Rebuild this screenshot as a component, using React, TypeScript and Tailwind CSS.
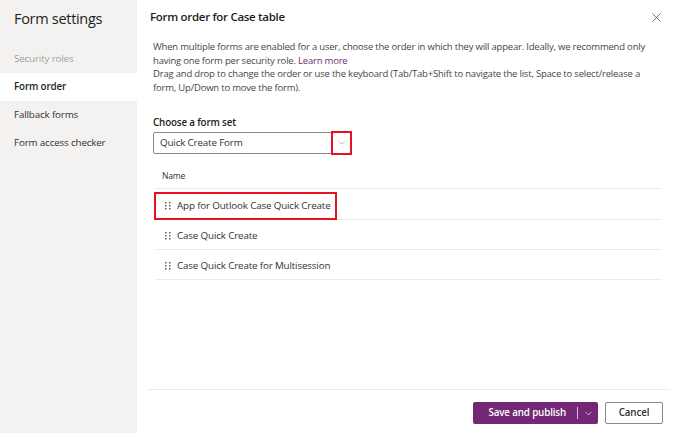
import { ChevronDown, X } from "lucide-react";

const navItems = [
  { label: "Security roles", muted: true },
  { label: "Form order", active: true },
  { label: "Fallback forms" },
  { label: "Form access checker" },
];

const forms = [
  "App for Outlook Case Quick Create",
  "Case Quick Create",
  "Case Quick Create for Multisession",
];

function Grip() {
  return (
    <svg width="6" height="8" viewBox="0 0 6 8" className="shrink-0">
      {[0, 3, 6].map((y) =>
        [0, 4].map((x) => <rect key={`${x}-${y}`} x={x} y={y} width="1.5" height="1.5" fill="#605e5c" />)
      )}
    </svg>
  );
}

export default function App() {
  return (
    <div
      className="flex h-[433px] w-[674px] bg-white text-[#323130] tracking-[-0.15px]"
      style={{ fontFamily: '"Open Sans", "Noto Sans", sans-serif' }}
    >
      {/* sidebar */}
      <aside className="w-[137px] shrink-0 bg-[#f3f2f1] pt-[8px]">
        <h1 className="pl-[14px] text-[14.5px] leading-[22px] tracking-[-0.3px] text-[#201f1e]">Form settings</h1>
        <nav className="mt-[15px] flex flex-col">
          {navItems.map((n) => (
            <div
              key={n.label}
              className={`h-[28px] flex items-center pl-[14px] text-[9.8px] ${
                n.active ? "bg-white font-semibold text-[#201f1e]" : n.muted ? "text-[#a19f9d]" : "text-[#323130]"
              }`}
            >
              {n.label}
            </div>
          ))}
        </nav>
      </aside>

      {/* main */}
      <main className="flex-1 flex flex-col">
        <div className="flex items-center justify-between pl-[13px] pr-[10px] pt-[8px]">
          <h2 className="text-[11.5px] leading-[18px] font-semibold tracking-[-0.3px] text-[#201f1e]">Form order for Case table</h2>
          <X size={15} strokeWidth={1.2} className="text-[#742774]" />
        </div>

        <div className="pl-[16px] pr-[6px] mt-[14px] text-[9.5px] leading-[13.5px] tracking-[-0.2px] text-[#484644] whitespace-nowrap">
          <p>
            When multiple forms are enabled for a user, choose the order in which they will appear. Ideally, we recommend only
            <br />
            having one form per security role. <span className="text-[#742774]">Learn more</span>
          </p>
          <p>
            Drag and drop to change the order or use the keyboard (Tab/Tab+Shift to navigate the list, Space to select/release a
            <br />
            form, Up/Down to move the form).
          </p>
        </div>

        <div className="pl-[16px] mt-[22px]">
          <label className="block text-[9.8px] leading-[14px] font-semibold text-[#201f1e]">Choose a form set</label>
          <div className="mt-[2px] flex h-[22px] w-[198px] items-center border border-[#8a8886] rounded-[2px]">
            <span className="flex-1 pl-[6px] text-[9.8px] text-[#323130]">Quick Create Form</span>
            <div className="flex h-[24px] w-[21px] items-center justify-center border-2 border-[#e81123] -mr-[2px]">
              <ChevronDown size={10} strokeWidth={1.1} className="text-[#605e5c]" />
            </div>
          </div>
        </div>

        <div className="ml-[18px] mr-[12px] mt-[9px]">
          <div className="h-[26px] pl-[7px] pt-[1px] flex items-center text-[8.5px] text-[#323130] border-b border-[#edebe9]">Name</div>
          {forms.map((f, i) => (
            <div
              key={f}
              className={`${i === 0 ? "h-[31px] pt-[3px]" : "h-[30px] pt-[2px]"} flex items-start border-b border-[#edebe9]`}
            >
              <div
                className={`-ml-[1px] flex h-[28px] shrink-0 items-center gap-[6px] pl-[9px] pr-[4px] text-[9.8px] text-[#323130] border-2 ${
                  i === 0 ? "border-[#e81123]" : "border-transparent"
                }`}
              >
                <Grip />
                <span>{f}</span>
              </div>
            </div>
          ))}
        </div>

        <div className="mt-auto ml-[10px] mr-[4px] border-t border-[#edebe9] flex justify-end gap-[7px] pt-[12px] pb-[9px] pr-[7px]">
          <button className="flex h-[22px] items-center rounded-[2px] bg-[#742774] text-white text-[9.8px] font-semibold">
            <span className="pl-[15px] pr-[11px]">Save and publish</span>
            <span className="h-[12px] w-px bg-white/70" />
            <span className="flex w-[20px] justify-center">
              <ChevronDown size={11} strokeWidth={1.4} />
            </span>
          </button>
          <button className="h-[22px] w-[58px] rounded-[2px] border border-[#8a8886] bg-white text-[9.8px] font-semibold text-[#323130]">
            Cancel
          </button>
        </div>
      </main>
    </div>
  );
}
